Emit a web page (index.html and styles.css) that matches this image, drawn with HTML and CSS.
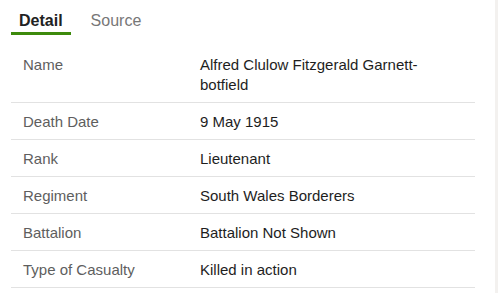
FILE: index.html
```html
<!DOCTYPE html>
<html>
<head>
<meta charset="utf-8">
<link rel="stylesheet" href="styles.css">
</head>
<body>
<div class="page">
  <main class="content">
    <nav class="tabs">
      <div class="tab active">Detail</div>
      <div class="tab">Source</div>
    </nav>
    <div class="table">
      <div class="row"><div class="label">Name</div><div class="value">Alfred Clulow Fitzgerald Garnett-botfield</div></div>
      <div class="row"><div class="label">Death Date</div><div class="value">9 May 1915</div></div>
      <div class="row"><div class="label">Rank</div><div class="value">Lieutenant</div></div>
      <div class="row"><div class="label">Regiment</div><div class="value">South Wales Borderers</div></div>
      <div class="row"><div class="label">Battalion</div><div class="value">Battalion Not Shown</div></div>
      <div class="row"><div class="label">Type of Casualty</div><div class="value">Killed in action</div></div>
    </div>
  </main>
  <div class="edge"></div>
</div>
</body>
</html>
```
FILE: styles.css
```css
html, body {
  margin: 0;
  padding: 0;
  background: #ffffff;
}
body {
  font-family: "Liberation Sans", Arial, sans-serif;
  width: 498px;
  height: 293px;
  overflow: hidden;
}
.page {
  display: flex;
  height: 293px;
}
.content {
  flex: 1;
  padding: 0 20px 0 11px;
}
.edge {
  width: 3px;
  background: #f3f1ef;
}
.tabs {
  display: flex;
  gap: 12px;
  padding-top: 11px;
}
.tab {
  font-size: 16px;
  line-height: 20px;
  padding: 0 8px 1px;
  color: #777777;
  border-bottom: 3px solid transparent;
}
.tab.active {
  color: #222222;
  font-weight: bold;
  border-bottom-color: #3d8a0c;
}
.table {
  margin-top: 11px;
}
.row {
  display: grid;
  grid-template-columns: 189px 1fr;
  border-bottom: 1px solid #e2e2e2;
  padding: 9px 0 7px;
  font-size: 15px;
  line-height: 20px;
}
.label {
  padding-left: 12px;
  color: #5e5e5e;
}
.value {
  padding-right: 12px;
  color: #1e1e1e;
}
```
